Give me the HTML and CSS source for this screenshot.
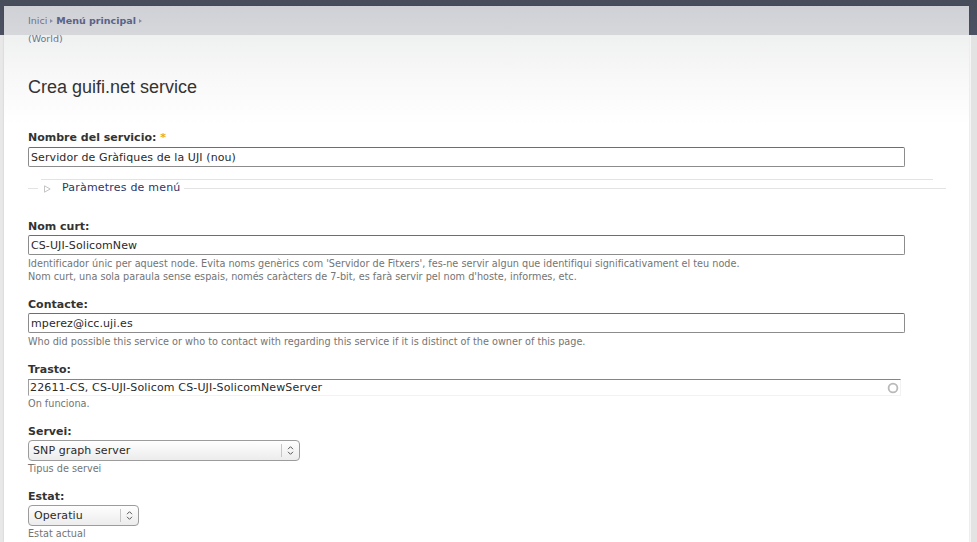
FILE: index.html
```html
<!DOCTYPE html>
<html lang="ca">
<head>
<meta charset="utf-8">
<title>Crea guifi.net service</title>
<link rel="stylesheet" href="styles.css">
</head>
<body>
<div class="page">
  <div class="panel">
    <div class="breadcrumb">
      <div class="crumbs"><span class="crumb">Inici</span><span class="sep"></span><span class="crumb strong">Menú principal</span><span class="sep"></span></div>
      <div class="crumb">(World)</div>
    </div>
    <h1 class="title">Crea guifi.net service</h1>
    <form class="form">
      <div class="item item-name">
        <label class="label">Nombre del servicio: <span class="req">*</span></label>
        <input class="text" type="text" value="Servidor de Gràfiques de la UJI (nou)">
      </div>
      <div class="fieldset">
        <div class="fs-top"></div>
        <div class="fs-row">
          <span class="fs-line short"></span>
          <svg class="fs-tri" width="7" height="8" viewBox="0 0 7 8"><path d="M0.5 0.8 L6.2 4 L0.5 7.2 Z" fill="none" stroke="#c4c4c4" stroke-width="1"/></svg>
          <span class="fs-legend">Paràmetres de menú</span>
          <span class="fs-line long"></span>
        </div>
      </div>
      <div class="item item-short">
        <label class="label">Nom curt:</label>
        <input class="text" type="text" value="CS-UJI-SolicomNew">
        <div class="desc">Identificador únic per aquest node. Evita noms genèrics com 'Servidor de Fitxers', fes-ne servir algun que identifiqui significativament el teu node.<br>Nom curt, una sola paraula sense espais, només caràcters de 7-bit, es farà servir pel nom d'hoste, informes, etc.</div>
      </div>
      <div class="item">
        <label class="label">Contacte:</label>
        <input class="text" type="text" value="mperez@icc.uji.es">
        <div class="desc">Who did possible this service or who to contact with regarding this service if it is distinct of the owner of this page.</div>
      </div>
      <div class="item">
        <label class="label label-trasto">Trasto:</label>
        <div class="auto-wrap">
          <input class="auto" type="text" value="22611-CS, CS-UJI-Solicom CS-UJI-SolicomNewServer">
          <svg class="throbber" width="12" height="12" viewBox="0 0 12 12"><circle cx="6" cy="6" r="4.4" fill="none" stroke="#b9b9b9" stroke-width="1.8"/></svg>
        </div>
        <div class="desc desc-tight">On funciona.</div>
      </div>
      <div class="item">
        <label class="label">Servei:</label>
        <div class="select select-wide">
          <span class="sel-val">SNP graph server</span>
          <span class="sel-arrow"><svg width="7" height="11" viewBox="0 0 7 11"><path d="M1 4.2 L3.5 1.7 L6 4.2 M1 6.8 L3.5 9.3 L6 6.8" fill="none" stroke="#555" stroke-width="1"/></svg></span>
        </div>
        <div class="desc desc-sel">Tipus de servei</div>
      </div>
      <div class="item">
        <label class="label">Estat:</label>
        <div class="select select-narrow">
          <span class="sel-val">Operatiu</span>
          <span class="sel-arrow"><svg width="7" height="11" viewBox="0 0 7 11"><path d="M1 4.2 L3.5 1.7 L6 4.2 M1 6.8 L3.5 9.3 L6 6.8" fill="none" stroke="#555" stroke-width="1"/></svg></span>
        </div>
        <div class="desc desc-sel">Estat actual</div>
      </div>
    </form>
  </div>
</div>
</body>
</html>
```
FILE: styles.css
```css
html, body {
  margin: 0;
  padding: 0;
}
body {
  font-family: "DejaVu Sans", "Noto Sans", sans-serif;
  color: #333;
}
.page {
  height: 542px;
  overflow: hidden;
  padding-top: 6px;
  box-sizing: border-box;
  background: linear-gradient(to right, #e8e8e8 0, #e8e8e8 969px, #f7f7f7 969px, #f7f7f7 971px, #e3e3e3 971px);
  position: relative;
}
.page::before {
  content: "";
  display: block;
  position: absolute;
  left: 0;
  top: 0;
  width: 100%;
  height: 35px;
  background: linear-gradient(#474d5b, #4c5262);
  z-index: 0;
}
.panel {
  position: relative;
  z-index: 1;
  margin-left: 4px;
  width: 965px;
  height: 536px;
  box-sizing: border-box;
  padding-left: 24px;
  background: linear-gradient(#cfd1d6 0, #d5d7db 29px, #eff0f0 29px, #f8f8f8 70px, #ffffff 120px);
  box-shadow: 0 0 2px rgba(0, 0, 0, 0.12);
}
.breadcrumb {
  padding-top: 6px;
  font-size: 9.5px;
  line-height: 18px;
  color: #6b7393;
}
.crumbs {
  display: flex;
  align-items: center;
}
.crumb.strong {
  font-weight: bold;
  color: #5b6287;
}
.sep {
  display: inline-block;
  width: 0;
  height: 0;
  border-left: 3px solid #8a8fa5;
  border-top: 2.5px solid transparent;
  border-bottom: 2.5px solid transparent;
  margin: 0 3px 0 3px;
}
.title {
  margin: 27px 0 0;
  font-family: "Liberation Sans", Arial, sans-serif;
  font-size: 18px;
  line-height: 24px;
  font-weight: normal;
  color: #333;
}
.form {
  margin-top: 30px;
}
.item {
  margin-bottom: 13px;
}
.item-name {
  margin-top: 0;
  margin-bottom: 0;
}
.label {
  display: block;
  font-size: 11px;
  line-height: 14px;
  font-weight: bold;
  color: #333;
  padding-top: 2px;
  margin-bottom: 1px;
}
.item-name .label {
  margin-bottom: 2px;
}
.label-trasto {
  margin-bottom: 2px;
}
.req {
  color: #f0a81e;
}
.text {
  display: block;
  width: 877px;
  height: 20px;
  box-sizing: border-box;
  margin: 0;
  padding: 0 2px;
  border: 1px solid #8c8c8c;
  border-top-color: #6e6e6e;
  border-radius: 2px;
  font-family: "DejaVu Sans", sans-serif;
  font-size: 11px;
  letter-spacing: 0.1px;
  color: #2a2a2a;
  background: #fff;
  outline: none;
}
.desc {
  margin-top: 2px;
  font-size: 9.7px;
  line-height: 13px;
  color: #747474;
  white-space: nowrap;
}
.desc-tight {
  margin-top: 1px;
}
.desc-sel {
  margin-top: 1px;
}
.fieldset {
  margin-top: 12px;
}
.fs-top {
  margin-left: 13px;
  width: 892px;
  border-top: 1px solid #e3e3e3;
}
.fs-row {
  display: flex;
  align-items: center;
  width: 918px;
  height: 16px;
}
.fs-line {
  height: 1px;
  background: #e3e3e3;
}
.fs-line.short {
  width: 10px;
}
.fs-line.long {
  flex: 1;
  margin-left: 3px;
}
.fs-tri {
  margin-left: 6px;
  margin-top: 2px;
}
.fs-legend {
  margin-left: 11px;
  font-size: 11px;
  line-height: 14px;
  letter-spacing: 0.2px;
  color: #2a376a;
}
.item-short {
  margin-top: 22px;
}
.auto-wrap {
  position: relative;
  width: 873px;
}
.auto {
  display: block;
  width: 873px;
  height: 17px;
  box-sizing: border-box;
  margin: 0;
  padding: 0 1px;
  border: 1px solid #f2f2f2;
  border-top-color: #858585;
  border-left-color: #a0a0a0;
  font-family: "DejaVu Sans", sans-serif;
  font-size: 11px;
  letter-spacing: 0.15px;
  color: #2a2a2a;
  background: #fff;
  outline: none;
}
.throbber {
  position: absolute;
  right: 2px;
  top: 3px;
}
.select {
  display: flex;
  align-items: center;
  height: 21px;
  margin-top: 1px;
  box-sizing: border-box;
  border: 1px solid #9c9c9c;
  border-radius: 4px;
  background: linear-gradient(#fefefe, #ececec);
  font-size: 11px;
  letter-spacing: 0.1px;
  color: #2a2a2a;
}
.select-wide {
  width: 272px;
}
.select-narrow {
  width: 111px;
}
.sel-val {
  flex: 1;
  padding-left: 4px;
  white-space: nowrap;
}
.select-narrow .sel-val {
  padding-left: 5px;
}
.sel-arrow {
  width: 18px;
  height: 13px;
  box-sizing: border-box;
  border-left: 1px solid #c6c6c6;
  display: flex;
  align-items: center;
  justify-content: center;
}
```
